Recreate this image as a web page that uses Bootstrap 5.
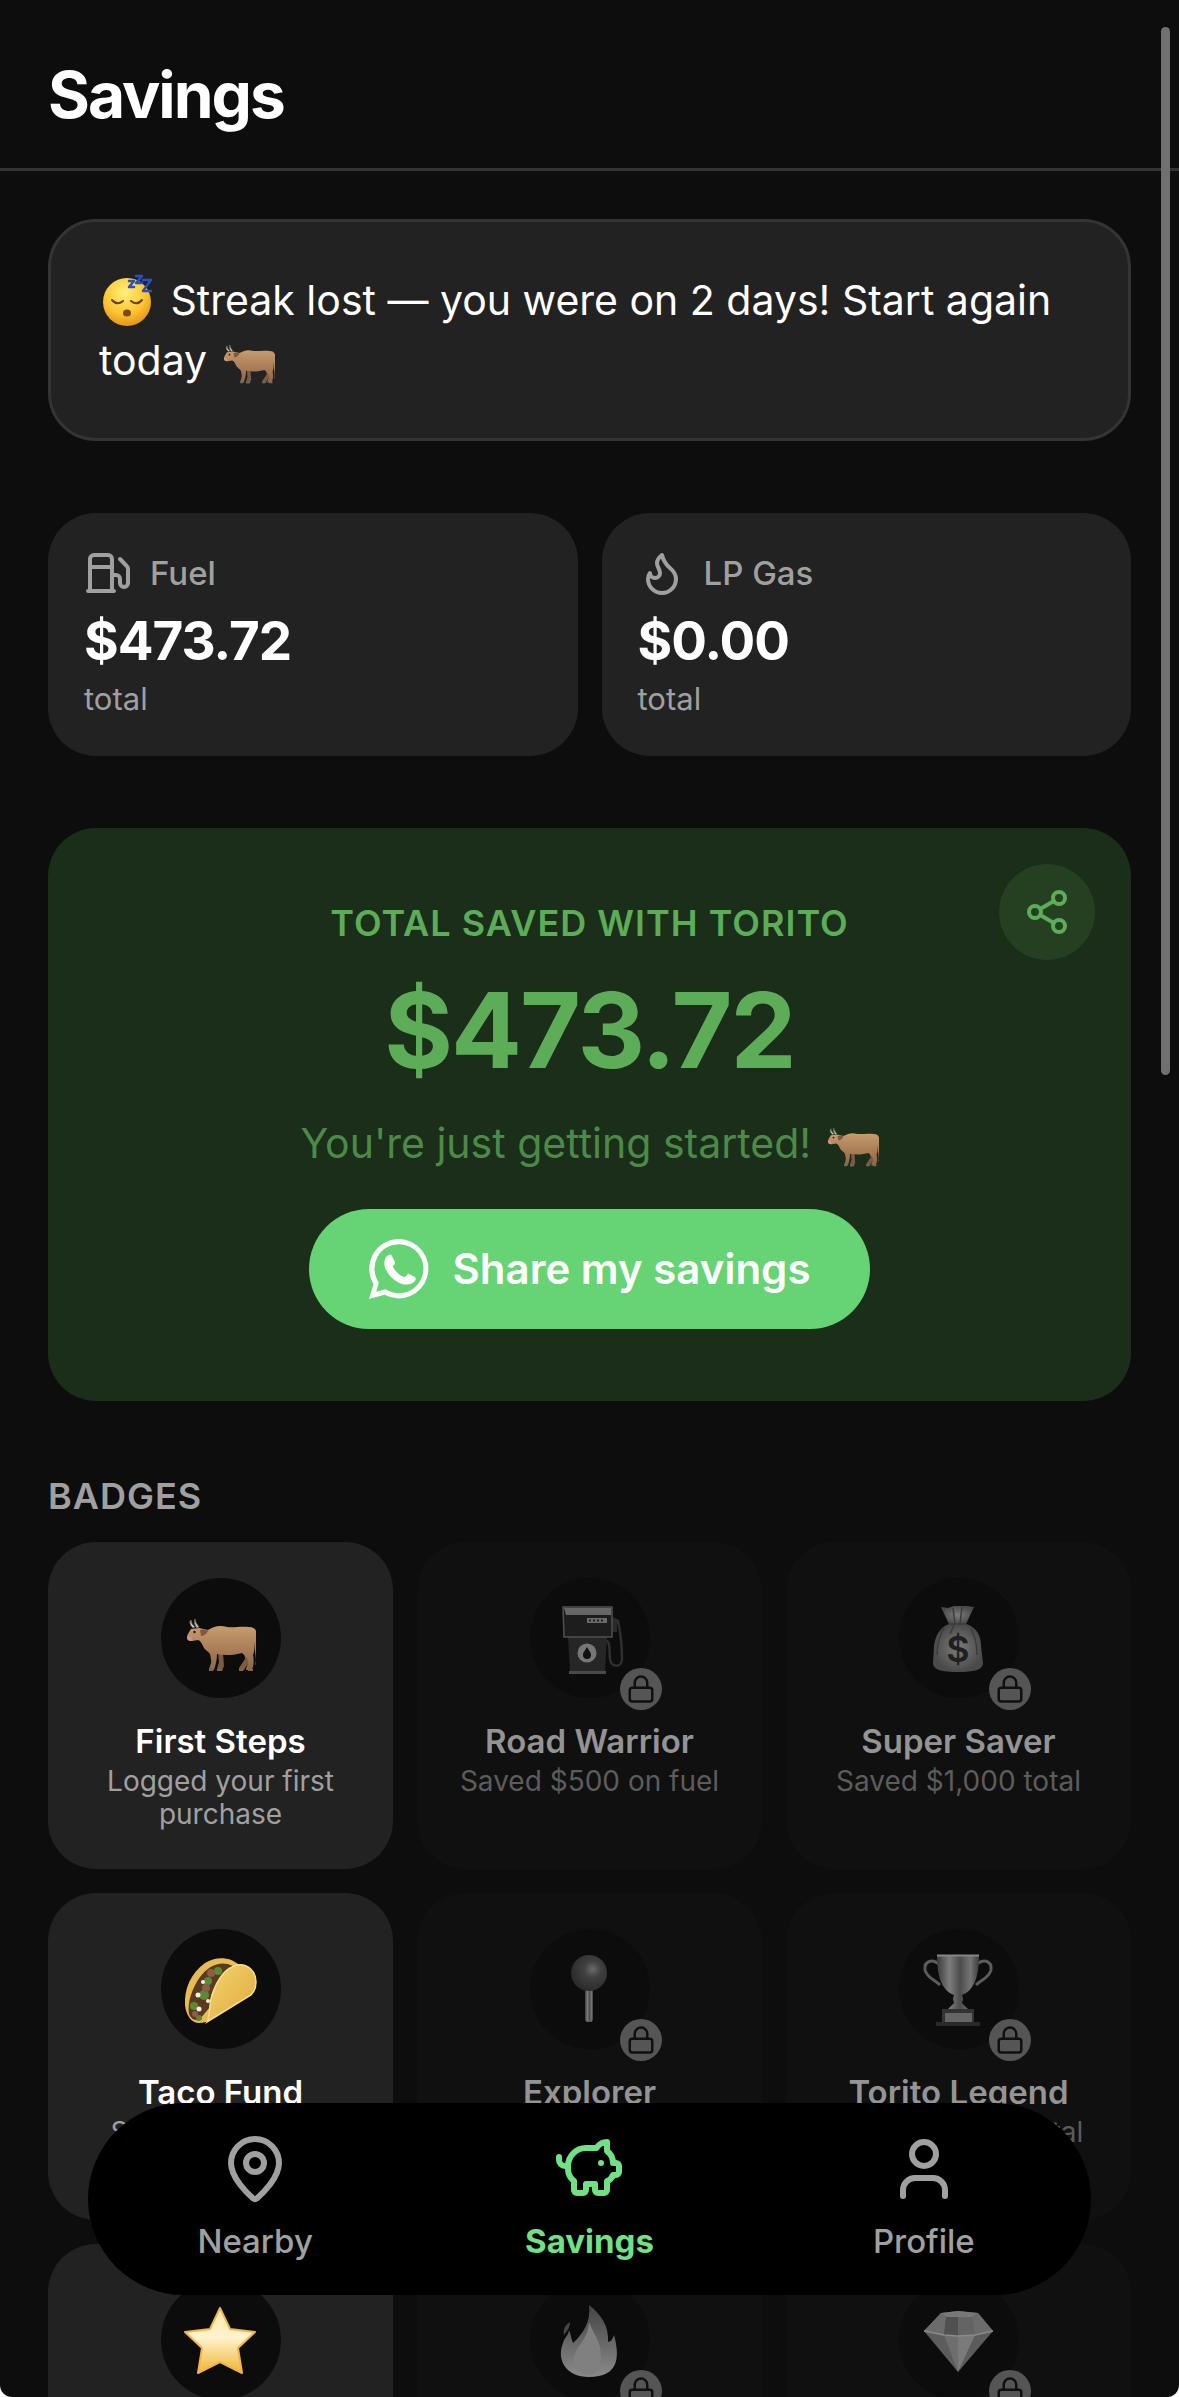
<!DOCTYPE html>
<html lang="en">
<head>
<meta charset="utf-8">
<meta name="viewport" content="width=device-width, initial-scale=1">
<title>Savings</title>
<link href="https://cdn.jsdelivr.net/npm/bootstrap@5.3.0/dist/css/bootstrap.min.css" rel="stylesheet">
<style>
  body { background: #fff; font-family: Inter, "Liberation Sans", sans-serif; color: #fff; }
  .app-shell { background: #0d0d0d; border-radius: 0 0 12px 12px; }
  .app-header { padding: 57px 48px 36px; border-bottom: 3px solid #343434; }
  .app-title { font-size: 64px; line-height: 75px; font-weight: 700; letter-spacing: -2px; }
  .app-body { padding: 48px; }
  .panel { background: #222; border-radius: 48px; }
  .streak-note { border: 3px solid #343434; padding: 48px; margin-bottom: 72px; font-size: 41px; line-height: 60px; }
  .face-emoji { width: 60px; height: 54px; vertical-align: -12px; }
  .ox-emoji { width: 52px; height: 39px; vertical-align: -9px; margin-left: 4px; }

  .stat-row { gap: 24px; margin-bottom: 72px; }
  .stat-tile { padding: 36px; }
  .stat-head { gap: 18px; margin-bottom: 8px; font-size: 33px; line-height: 48px; font-weight: 500; color: #a0a0a0; }
  .stat-head svg { width: 48px; height: 48px; }
  .stat-value { font-size: 53px; line-height: 72px; font-weight: 700; letter-spacing: -1px; }
  .stat-note { font-size: 31px; line-height: 43px; color: #a0a0a0; }

  .saved-panel { background: #1a2e1a; border-radius: 48px; padding: 72px 48px; margin-bottom: 72px; color: #5cac58; }
  .round-share { top: 36px; right: 36px; width: 96px; height: 96px; border: 0; background: #253f21; color: #5cac58; }
  .round-share svg { width: 48px; height: 48px; }
  .caps-label { font-size: 36px; line-height: 46px; font-weight: 600; letter-spacing: 1px; text-transform: uppercase; }
  .saved-amount { margin: 12px 0; font-size: 105px; line-height: 143px; font-weight: 700; letter-spacing: -2px; }
  .saved-mood { font-size: 41px; line-height: 60px; color: #4b8a47; }
  .whatsapp-btn { margin-top: 36px; height: 120px; gap: 24px; padding: 0 60px; border: 0; background: #66d374; color: #fff; font-size: 42px; line-height: 60px; font-weight: 600; }
  .whatsapp-btn svg { width: 60px; height: 60px; }

  .section-label { color: #a0a0a0; margin-bottom: 23px; }
  .badge-grid { display: grid; grid-template-columns: repeat(3, minmax(0, 1fr)); gap: 24px; }
  .award { padding: 36px; }
  .award-disc { width: 120px; height: 120px; border-radius: 50%; background: #0c0c0c; margin-bottom: 19px; }
  .award-disc > svg { width: 120px; height: 120px; }
  .award-name { font-size: 33px; line-height: 48px; font-weight: 600; white-space: nowrap; }
  .award-desc { font-size: 28px; line-height: 33px; min-height: 68px; color: #a0a0a0; }
  .award.locked { background: #101010; color: #949494; }
  .award.locked .award-desc { color: #5c5c5c; }
  .lock-chip { right: -12px; bottom: -12px; width: 42px; height: 42px; background: #555; color: #101010; }
  .lock-chip svg { width: 30px; height: 30px; }

  .tab-bar { left: 88px; right: 88px; bottom: 102px; padding: 30px 0; border-radius: 96px; background: #000; z-index: 2; }
  .tab-link { gap: 12px; font-size: 33px; line-height: 48px; font-weight: 500; color: #a0a0a0; text-decoration: none; }
  .tab-link svg { width: 72px; height: 72px; }
  .tab-link.current { color: #72e084; font-weight: 700; }
  .scroll-thumb { top: 27px; right: 9px; width: 9px; height: 1048px; border-radius: 5px; background: #707070; z-index: 3; }
  .line-icon { fill: none; stroke: currentColor; stroke-width: 2; stroke-linecap: round; stroke-linejoin: round; }
</style>
<script src="https://cdn.jsdelivr.net/npm/bootstrap@5.3.0/dist/js/bootstrap.bundle.min.js"></script>
</head>
<body>
<svg width="0" height="0" class="position-absolute" aria-hidden="true">
  <defs>
    <linearGradient id="hide" x1="0" y1="0" x2="0" y2="1"><stop offset="0" stop-color="#c79c6e"/><stop offset=".6" stop-color="#a67a55"/><stop offset="1" stop-color="#8c6549"/></linearGradient>
    <radialGradient id="skin" cx=".45" cy=".3" r=".75"><stop offset="0" stop-color="#fff07a"/><stop offset=".6" stop-color="#fbc531"/><stop offset="1" stop-color="#e08a16"/></radialGradient>
    <linearGradient id="gold" x1="0" y1="0" x2="0" y2="1"><stop offset="0" stop-color="#ffe9a8"/><stop offset=".45" stop-color="#fff3cf"/><stop offset="1" stop-color="#f2b632"/></linearGradient>
    <linearGradient id="shell" x1="0" y1="0" x2="1" y2="1"><stop offset="0" stop-color="#f4d56f"/><stop offset="1" stop-color="#dfa83c"/></linearGradient>
    <linearGradient id="steel" x1="0" y1="0" x2="1" y2="0"><stop offset="0" stop-color="#3c3c3c"/><stop offset=".3" stop-color="#7c7c7c"/><stop offset=".55" stop-color="#4c4c4c"/><stop offset=".8" stop-color="#747474"/><stop offset="1" stop-color="#3c3c3c"/></linearGradient>
    <radialGradient id="sack"><stop offset="0" stop-color="#7c7c7c"/><stop offset="1" stop-color="#4a4a4a"/></radialGradient>
    <radialGradient id="pinball" cx=".6" cy=".4" r=".6"><stop offset="0" stop-color="#6a6a6a"/><stop offset=".4" stop-color="#404040"/><stop offset="1" stop-color="#2c2c2c"/></radialGradient>
    <linearGradient id="blaze" x1="0" y1="0" x2="0" y2="1"><stop offset="0" stop-color="#444"/><stop offset=".5" stop-color="#666"/><stop offset="1" stop-color="#8a8a8a"/></linearGradient>
  </defs>
  <symbol id="ox" viewBox="0 0 70 53">
    <path d="M58 33l1 7-6 9v2h5l4-7 1-12zM32 34l1 9-2 7v2h5l2-5-1-13z" fill="#7d5b42"/>
    <path d="M5 10C3 13 1 16 1 18c0 3 2 4 5 4l6-1c3 1 4 4 6 8 1 2 5 4 6 6 1 5 2 8 0 12l-1 4h5c2-6 3-11 3-16 9 2 18 1 25-1 3 3 6 5 6 9l-2 7v1h6c2-5 2-10 1-15 2-4 1-10 1-14l2 19c0 2-1 4 0 5l2-3-1-24c0-8-2-11-8-11-9-1-15 1-22 0-8-2-12-1-19 3L13 9z" fill="url(#hide)"/>
    <path d="M7 9C4 6 3 3 5 1c0 3 2 5 4 7zM11 9C8 5 8 2 9 0c0 3 2 5 4 8z" fill="#d8d0cc" stroke="#6c625e" stroke-width="1"/>
    <path d="M14 11c4-1 7-1 8 1-2 4-5 5-7 5z" fill="#84583f"/>
    <path d="M1 17l4 1 1 4c-4 0-5-1-5-4z" fill="#c99a86"/>
    <circle cx="8.500" cy="13" r="1.200" fill="#231812"/>
    <path d="M23 49h5l-1 3h-4zM31 50h5v2h-5zM53 50h5l-1 2h-4zM62 50h5v2h-5z" fill="#75685d"/>
  </symbol>
  <symbol id="lock" viewBox="0 0 24 24"><g class="line-icon"><rect x="3" y="11" width="18" height="11" rx="2"/><path d="M7 11V7a5 5 0 0 1 10 0v4"/></g></symbol>
</svg>

<div class="app-shell vh-100 overflow-hidden position-relative">
  <header class="app-header"><h1 class="app-title m-0">Savings</h1></header>

  <main class="app-body">
    <p class="panel streak-note"><svg class="face-emoji" viewBox="0 0 60 54" role="img" aria-label="Sleeping face"><circle cx="28" cy="29" r="24" fill="url(#skin)"/><path d="M13 27q5 6 11 1M32 28q6 5 11-1" fill="none" stroke="#6c4014" stroke-width="2" stroke-linecap="round"/><ellipse cx="28" cy="40" rx="4" ry="3.500" fill="#7a4a1c"/><path d="M30 8h5l-5 6h5M37 3h6l-6 7h6M44 7h8l-8 11h8" fill="none" stroke="#2a4fc0" stroke-width="2.500" stroke-linejoin="round" stroke-linecap="round"/></svg> Streak lost — you were on 2 days! Start again today <svg class="ox-emoji" role="img" aria-label="Ox"><use href="#ox"/></svg></p>

    <section class="stat-row d-flex">
      <div class="panel stat-tile flex-fill w-50">
        <div class="stat-head d-flex align-items-center">
          <svg class="line-icon" viewBox="0 0 24 24"><path d="M14 13h2a2 2 0 0 1 2 2v2a2 2 0 0 0 4 0V10a2 2 0 0 0-.59-1.420L18 5"/><path d="M14 21V5a2 2 0 0 0-2-2H5a2 2 0 0 0-2 2v16M2 21h13M3 9h11"/></svg>
          <span>Fuel</span>
        </div>
        <div class="stat-value">$473.72</div>
        <div class="stat-note">total</div>
      </div>
      <div class="panel stat-tile flex-fill w-50">
        <div class="stat-head d-flex align-items-center">
          <svg class="line-icon" viewBox="0 0 24 24"><path d="M12 3q1 4 4 6.500t3 5.500a1 1 0 0 1-14 0 5 5 0 0 1 1-3 1 1 0 0 0 5 0c0-2-1.500-3-1.500-5q0-2 2.500-4"/></svg>
          <span>LP Gas</span>
        </div>
        <div class="stat-value">$0.00</div>
        <div class="stat-note">total</div>
      </div>
    </section>

    <section class="saved-panel position-relative d-flex flex-column align-items-center text-center">
      <button type="button" class="round-share position-absolute rounded-circle d-flex align-items-center justify-content-center p-0" aria-label="Share">
        <svg class="line-icon" viewBox="0 0 24 24"><circle cx="18" cy="5" r="3"/><circle cx="6" cy="12" r="3"/><circle cx="18" cy="19" r="3"/><path d="M8.590 13.510l6.830 3.980M15.410 6.510l-6.820 3.980"/></svg>
      </button>
      <div class="caps-label">Total saved with Torito</div>
      <div class="saved-amount">$473.72</div>
      <div class="saved-mood">You're just getting started! <svg class="ox-emoji" role="img" aria-label="Ox"><use href="#ox"/></svg></div>
      <button type="button" class="whatsapp-btn btn rounded-pill d-flex align-items-center">
        <svg viewBox="0 0 60 60" aria-hidden="true"><path fill-rule="evenodd" d="M30 0A29.700 29.700 0 0 0 4.500 45L0 60l15.500-4.200A29.700 29.700 0 1 0 30 0zM30 5.200A24.500 24.500 0 1 1 17.500 50.800l-1-.5-9.200 2.400 2.500-9-.6-1A24.500 24.500 0 0 1 30 5.200z" fill="#fff"/><path d="M18 17c2-2 4-2 5 0l3 6c1 2-3 4-2 5 3 5 6 8 11 10 2 1 3-4 5-3l6 3c1 1 1 3-1 5-4 3-8 3-12 2-8-3-13-8-17-16-1-5-1-9 2-12z" fill="#fff"/></svg>
        <span>Share my savings</span>
      </button>
    </section>

    <section>
      <h2 class="caps-label section-label">Badges</h2>
      <div class="badge-grid text-center">

        <article class="panel award">
          <div class="award-disc position-relative mx-auto"><svg viewBox="0 0 120 120"><use href="#ox" x="25" y="41" width="70" height="53"/></svg></div>
          <div class="award-name">First Steps</div>
          <div class="award-desc">Logged your first purchase</div>
        </article>

        <article class="panel award locked">
          <div class="award-disc position-relative mx-auto">
            <svg viewBox="0 0 120 120">
              <path d="M82 40l6 3c3 14 4 28 4 38 0 9-11 9-12 0-1-7 1-18-4-18" fill="none" stroke="#2f2f2f" stroke-width="2.500"/>
              <path d="M82 39l5 3v12h-4z" fill="#2a2a2a"/>
              <path d="M38 58h39l-2 36H40z" fill="#262626"/><path d="M39 93h37v3H39z" fill="#4a4a4a"/>
              <path d="M33 29h49v30H34z" fill="#1d1d1d" stroke="#505050" stroke-width="1.500"/><path d="M34 30h47v7H36z" fill="#666"/>
              <path d="M57 40h20v5H57z" fill="#6a6a6a"/><path d="M59 42.500h16" stroke="#222" stroke-width="2" stroke-dasharray="2 2"/>
              <circle cx="57" cy="75" r="9.500" fill="#767676"/><path d="M57 69c2 4 4 5 4 8a4 4 0 0 1-8 0c0-3 2-4 4-8z" fill="#111"/>
            </svg>
            <span class="lock-chip position-absolute rounded-circle d-flex align-items-center justify-content-center"><svg><use href="#lock"/></svg></span>
          </div>
          <div class="award-name">Road Warrior</div>
          <div class="award-desc">Saved $500 on fuel</div>
        </article>

        <article class="panel award locked">
          <div class="award-disc position-relative mx-auto">
            <svg viewBox="0 0 120 120">
              <path d="M42 29l7 1 6-2 8 0 5 0 7 1-8 17H50z" fill="url(#sack)"/><path d="M54 30l2 16M63 29l-2 17" stroke="#3c3c3c" stroke-width="1.500"/>
              <path d="M50 46h17c10 3 15 11 15 22l2 17c0 7-9 9-25 9s-25-2-25-9l1-17c1-10 6-19 15-22z" fill="url(#sack)"/>
              <path d="M50 46h17M45 50c-5 9-7 18-7 27M72 51c5 9 6 16 6 26M55 47l-4 9" fill="none" stroke="#3c3c3c" stroke-width="1.500"/>
              <text x="59" y="84" text-anchor="middle" font-family="Inter, sans-serif" font-size="36" font-weight="600" fill="#202020">$</text>
            </svg>
            <span class="lock-chip position-absolute rounded-circle d-flex align-items-center justify-content-center"><svg><use href="#lock"/></svg></span>
          </div>
          <div class="award-name">Super Saver</div>
          <div class="award-desc">Saved $1,000 total</div>
        </article>

        <article class="panel award">
          <div class="award-disc position-relative mx-auto">
            <svg viewBox="0 0 120 120">
              <path d="M78 36C68 27 54 28 44 34 30 44 23 60 24 76c1 10 6 18 14 18 4 0 8-1 11-3z" fill="#e8bc55"/>
              <path d="M72 37C60 31 48 36 39 48c-8 11-13 26-11 37 2 5 6 7 10 6l12-14z" fill="#5b3a22"/>
              <g fill="#5c8a34"><circle cx="57" cy="42" r="4"/><circle cx="47" cy="52" r="4"/><circle cx="43" cy="66" r="5"/><circle cx="33" cy="77" r="4"/><circle cx="38" cy="89" r="3"/></g>
              <g fill="#8c5f45"><circle cx="50" cy="44" r="4"/><circle cx="45" cy="59" r="4"/><circle cx="34" cy="85" r="3"/></g>
              <g fill="#f2efe2"><circle cx="37" cy="66" r="2.500"/><circle cx="38" cy="80" r="2.500"/><circle cx="42" cy="53" r="2"/><circle cx="47" cy="72" r="2"/></g>
              <path d="M76 36c10-2 19 6 19 17 0 6-1 9-5 13L46 93c4-8 1-15 5-27 5-15 13-27 25-30z" fill="url(#shell)" stroke="#f6df8e" stroke-width="1.500"/>
            </svg>
          </div>
          <div class="award-name">Taco Fund</div>
          <div class="award-desc">Saved $100 total</div>
        </article>

        <article class="panel award locked">
          <div class="award-disc position-relative mx-auto">
            <svg viewBox="0 0 120 120"><rect x="55" y="58" width="8" height="35" rx="3" fill="url(#steel)"/><circle cx="59" cy="44" r="18" fill="url(#pinball)"/></svg>
            <span class="lock-chip position-absolute rounded-circle d-flex align-items-center justify-content-center"><svg><use href="#lock"/></svg></span>
          </div>
          <div class="award-name">Explorer</div>
          <div class="award-desc">Visited 5 stations</div>
        </article>

        <article class="panel award locked">
          <div class="award-disc position-relative mx-auto">
            <svg viewBox="0 0 120 120">
              <path d="M41 36c-8-7-16-4-15 5 2 8 9 9 15 15M77 36c8-7 16-4 15 5-2 8-9 9-15 15" fill="none" stroke="#5c5c5c" stroke-width="3"/>
              <path d="M38 26h42c0 20-4 35-17 40l1 4-1 4 6 6H49l6-6-1-4 1-4C42 61 38 46 38 26z" fill="url(#steel)"/><path d="M38 26.500h42" stroke="#868686" stroke-width="2"/>
              <path d="M43 80h32v13H43z" fill="#333"/><path d="M37 93h44v4H37z" fill="#292929"/><path d="M46 84h27v9H46z" fill="#656565"/>
            </svg>
            <span class="lock-chip position-absolute rounded-circle d-flex align-items-center justify-content-center"><svg><use href="#lock"/></svg></span>
          </div>
          <div class="award-name">Torito Legend</div>
          <div class="award-desc">Saved $5,000 total</div>
        </article>

        <article class="panel award">
          <div class="award-disc position-relative mx-auto">
            <svg viewBox="0 0 120 120"><path d="M59 28l10 21 25 3-17 16 4 25-22-11-22 11 4-25-17-16 25-3z" fill="url(#gold)" stroke="#efb54a" stroke-width="2" stroke-linejoin="round"/></svg>
          </div>
        </article>

        <article class="panel award locked">
          <div class="award-disc position-relative mx-auto">
            <svg viewBox="0 0 120 120">
              <path d="M59 25c13 10 20 22 19 37 4-1 5-4 6-7 6 22 5 42-25 42-22 0-33-16-26-34 2-7 5-6 6-13 2 4 2 9 4 13 11-10 18-22 16-38z" fill="url(#blaze)"/>
              <path d="M40 42c-6 4-7 8-6 13 3-4 6-7 6-13z" fill="#444"/><path d="M59 42c5 13 12 20 12 34 0 12-5 19-13 19s-15-7-14-16c1-13 14-18 15-37z" fill="#808080"/>
            </svg>
            <span class="lock-chip position-absolute rounded-circle d-flex align-items-center justify-content-center"><svg><use href="#lock"/></svg></span>
          </div>
        </article>

        <article class="panel award locked">
          <div class="award-disc position-relative mx-auto">
            <svg viewBox="0 0 120 120">
              <path d="M42 33l17-2 20 2 15 18-35 41-34-41z" fill="#5c5c5c"/><path d="M42 33l17-2 20 2-6 4H47z" fill="#787878"/>
              <path d="M42 33l5 4-2 18-20-4zM79 33l-6 4 3 18 18-4z" fill="#6c6c6c"/><path d="M47 37h12v19l-14-1z" fill="#505050"/><path d="M59 37h14l3 18-17 1z" fill="#646464"/>
              <path d="M45 55l14 1v36z" fill="#6e6e6e"/><path d="M76 55l-17 1v36z" fill="#7a7a7a"/><path d="M25 51l20 4 14 1 17-1 18-4" fill="none" stroke="#8a8a8a" stroke-width="1.500"/>
            </svg>
            <span class="lock-chip position-absolute rounded-circle d-flex align-items-center justify-content-center"><svg><use href="#lock"/></svg></span>
          </div>
        </article>
      </div>
    </section>
  </main>

  <nav class="tab-bar position-absolute d-flex" aria-label="Main">
    <a href="#" class="tab-link d-flex flex-column align-items-center flex-fill w-100"><svg class="line-icon" viewBox="0 0 24 24"><path d="M20 10c0 4.993-5.539 10.193-7.399 11.799a1 1 0 0 1-1.202 0C9.539 20.193 4 14.993 4 10a8 8 0 0 1 16 0"/><circle cx="12" cy="10" r="3"/></svg>Nearby</a>
    <a href="#" class="tab-link current d-flex flex-column align-items-center flex-fill w-100" aria-current="page"><svg class="line-icon" viewBox="0 0 24 24"><path d="M11 17h3v2a1 1 0 0 0 1 1h2a1 1 0 0 0 1-1v-3a3.160 3.160 0 0 0 2-2h1a1 1 0 0 0 1-1v-2a1 1 0 0 0-1-1h-1a5 5 0 0 0-2-4V3a4 4 0 0 0-3.200 1.600l-.3.4H11a6 6 0 0 0-6 6v1a5 5 0 0 0 2 4v3a1 1 0 0 0 1 1h2a1 1 0 0 0 1-1zM16 10h.01M2 8v1a2 2 0 0 0 2 2h1"/></svg>Savings</a>
    <a href="#" class="tab-link d-flex flex-column align-items-center flex-fill w-100"><svg class="line-icon" viewBox="0 0 24 24"><path d="M19 21v-2a4 4 0 0 0-4-4H9a4 4 0 0 0-4 4v2"/><circle cx="12" cy="7" r="4"/></svg>Profile</a>
  </nav>
  <div class="scroll-thumb position-absolute"></div>
</div>
</body>
</html>
